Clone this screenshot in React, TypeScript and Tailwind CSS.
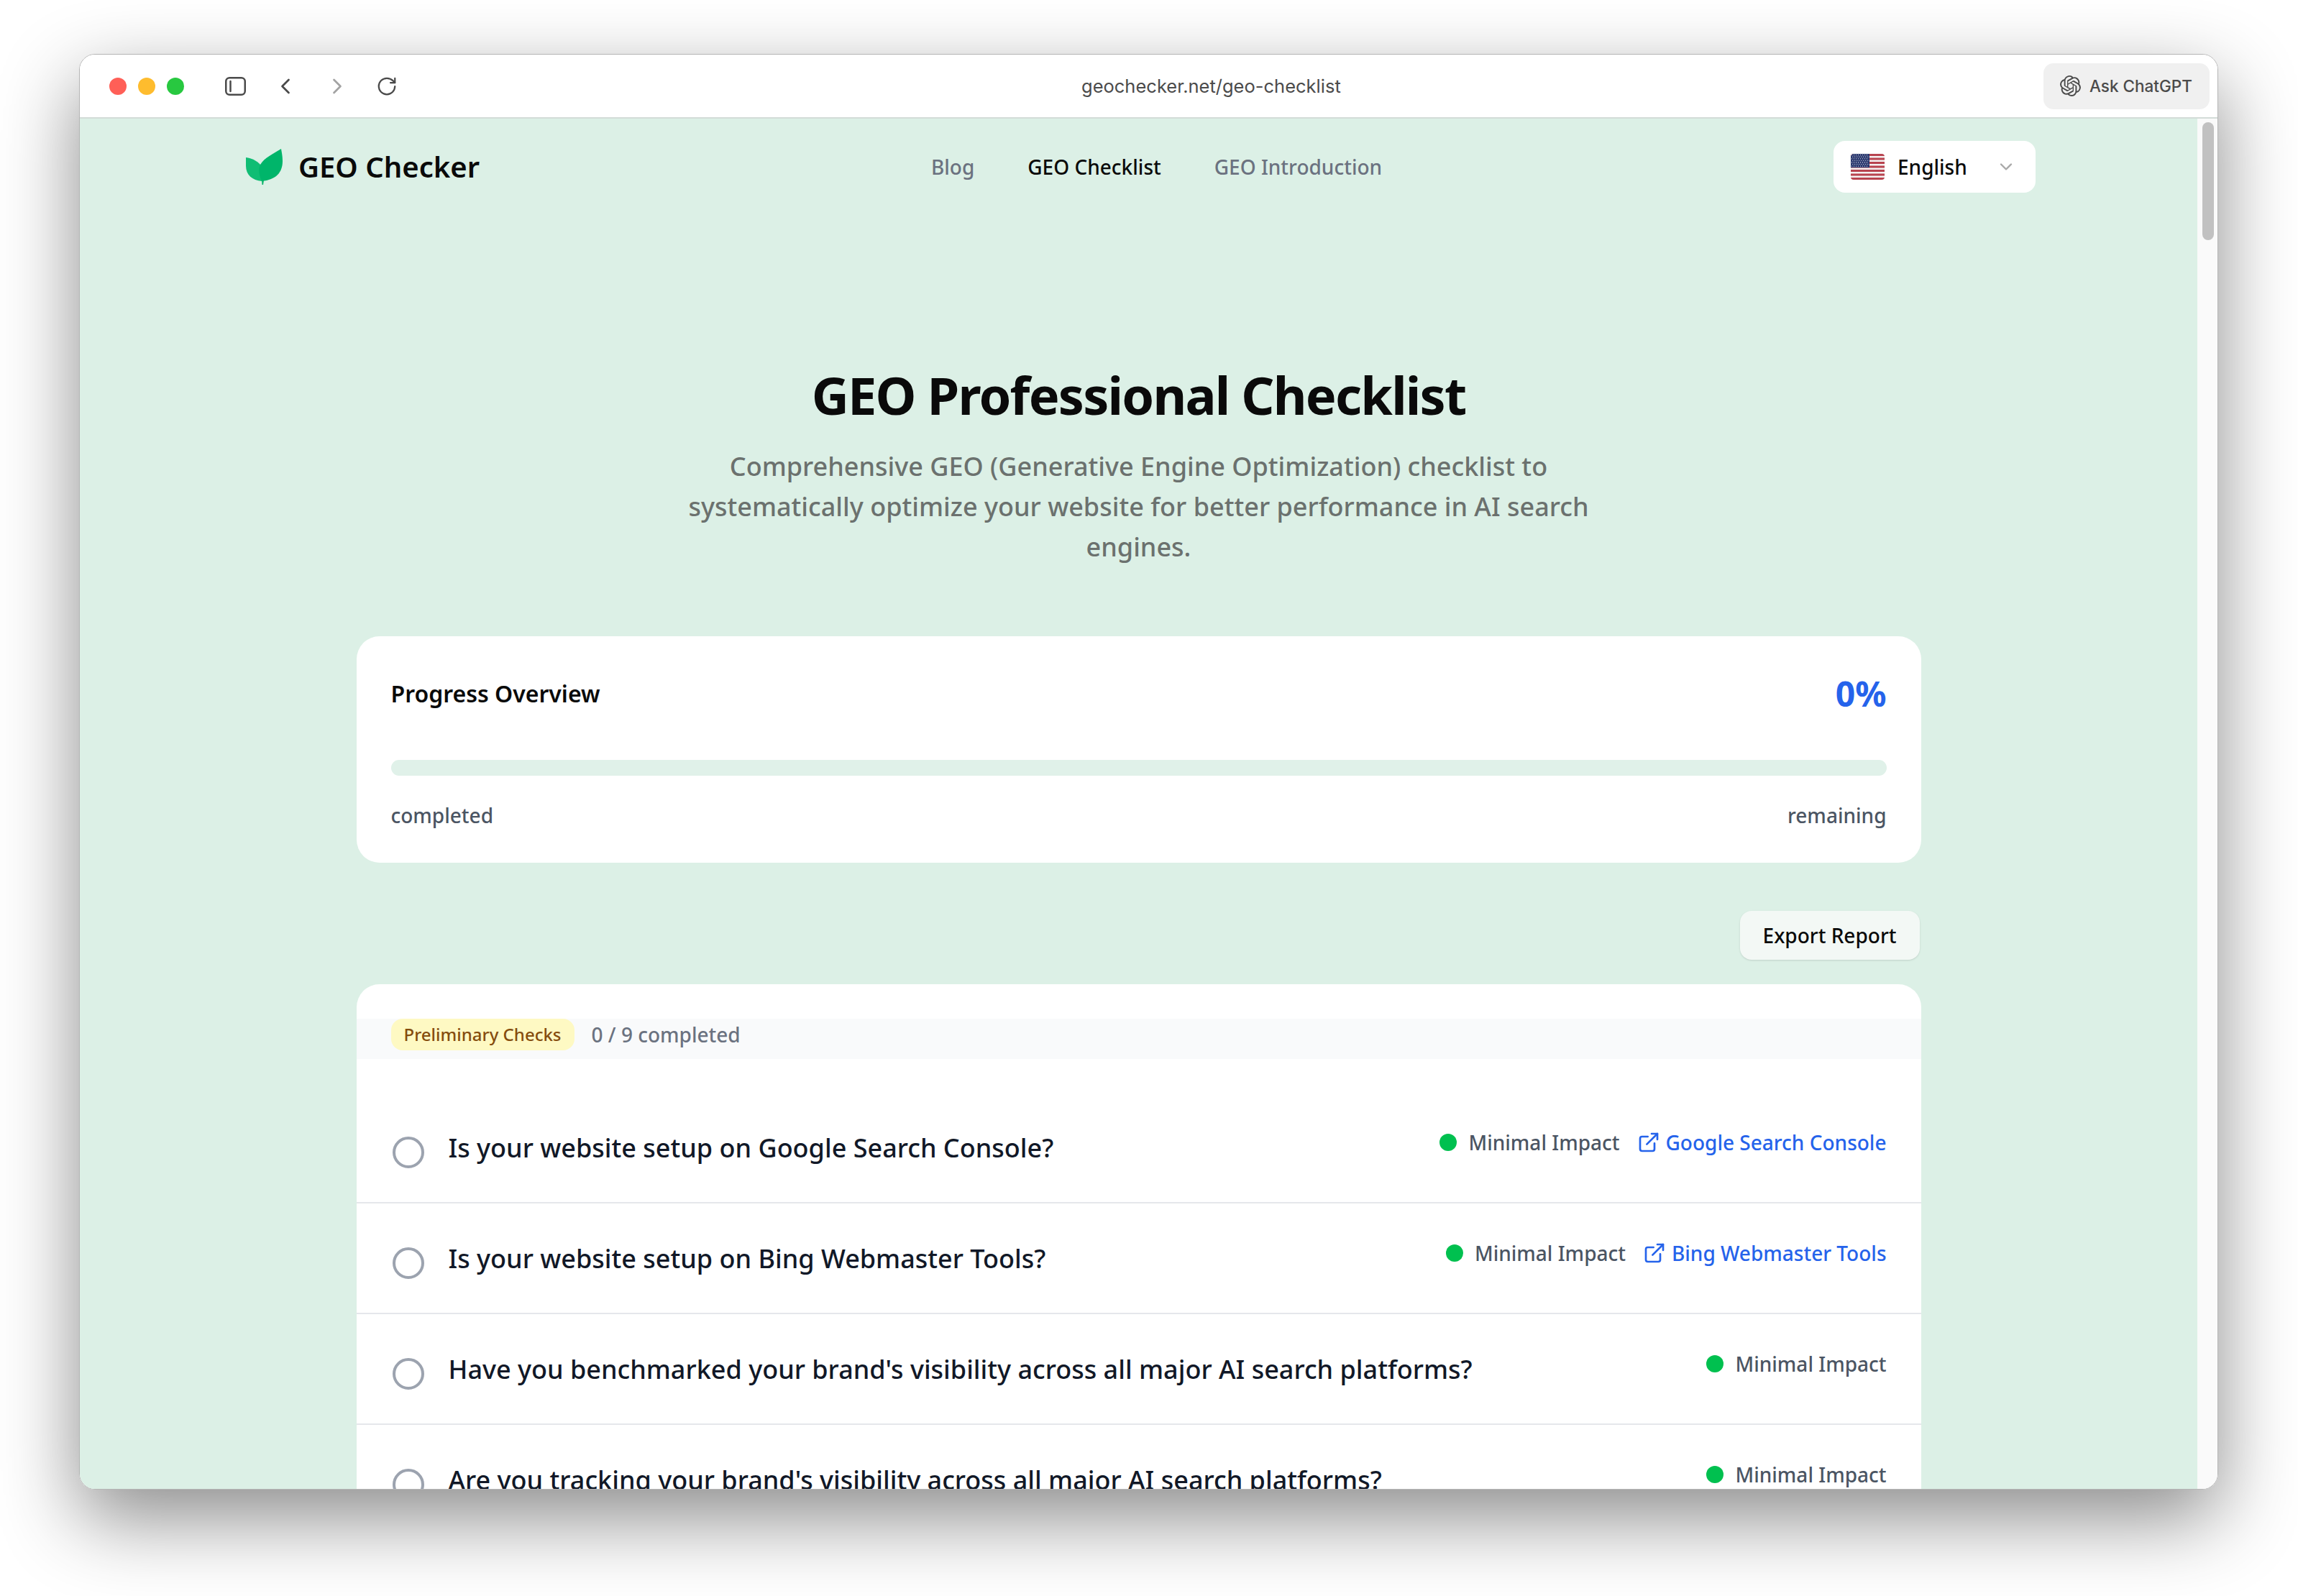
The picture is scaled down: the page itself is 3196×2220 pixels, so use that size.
import React from 'react';
import { ChevronDown, ChevronLeft, ChevronRight, ExternalLink, RotateCw } from 'lucide-react';
import { SiOpenai } from 'react-icons/si';

interface CheckItem {
  question: string;
  linkLabel?: string;
}

const items: CheckItem[] = [
  { question: 'Is your website setup on Google Search Console?', linkLabel: 'Google Search Console' },
  { question: 'Is your website setup on Bing Webmaster Tools?', linkLabel: 'Bing Webmaster Tools' },
  { question: "Have you benchmarked your brand's visibility across all major AI search platforms?" },
  { question: "Are you tracking your brand's visibility across all major AI search platforms?" },
];

const Leaf = () => (
  <svg viewBox="0 0 51 50" className="h-[50px] w-[51px] shrink-0">
    <path d="M22 44 L22.5 50 L24 50 L25 44 Z" fill="#10b56c" />
    <path d="M0 12 C8 13 16 17 20 22 L22 45 C9 44 0 36 0 24 Z" fill="#10bd74" />
    <path d="M49 0 C50 6 51 10 51 17 C51 33 42 43 22 45 C18 36 17 28 20 22 C26 12 38 7 49 0 Z" fill="#00b56a" />
  </svg>
);

const Flag = () => {
  const stars: React.ReactNode[] = [];
  for (let r = 0; r < 7; r++) {
    for (let c = 0; c < 8; c++) {
      stars.push(<circle key={`${r}-${c}`} cx={1.6 + c * 3 + (r % 2) * 1.2} cy={1.5 + r * 2.6} r={0.55} fill="#ffffff" />);
    }
  }
  return (
    <svg viewBox="0 0 47 36" className="h-[36px] w-[47px] shrink-0 rounded-[4px]">
      <rect width="47" height="36" fill="#f4f1f1" />
      {[0, 5.5, 11, 16.5, 22, 27.5, 33].map((y) => (
        <rect key={y} y={y} width="47" height="3" fill="#b8434f" />
      ))}
      <rect width="26" height="19" fill="#2c3a70" />
      {stars}
    </svg>
  );
};

const BrowserBar = () => (
  <div className="flex h-[89px] shrink-0 items-center border-b-2 border-[#d3dcd8] bg-white pl-[41px] pr-[11px]">
    <div className="flex gap-[16px]">
      <span className="h-[24px] w-[24px] rounded-full bg-[#ff5f57]" />
      <span className="h-[24px] w-[24px] rounded-full bg-[#febc2e]" />
      <span className="h-[24px] w-[24px] rounded-full bg-[#28c840]" />
    </div>
    <svg viewBox="0 0 29 26" fill="none" className="ml-[57px] h-[26px] w-[29px] text-[#4a4a4a]">
      <rect x="1.25" y="1.25" width="26.5" height="23.5" rx="5" stroke="currentColor" strokeWidth="2.5" />
      <path d="M7.5 6v14" stroke="currentColor" strokeWidth="2.5" strokeLinecap="round" />
    </svg>
    <ChevronLeft className="ml-[37px] h-[36px] w-[36px] text-[#4a4a4a]" strokeWidth={1.8} />
    <ChevronRight className="ml-[36px] h-[36px] w-[36px] text-[#a3a3a3]" strokeWidth={1.8} />
    <RotateCw className="ml-[36px] h-[30px] w-[30px] text-[#4a4a4a]" strokeWidth={1.8} />
    <span className="ml-[951px] mt-[2px] font-['Inter',sans-serif] text-[25.5px] text-[#4b4b4b]">geochecker.net/geo-checklist</span>
    <button className="ml-auto flex h-[64px] w-[231px] items-center gap-[12px] rounded-[14px] bg-[#f0f0f0] pl-[23px] font-['Inter',sans-serif] text-[22.5px] font-medium text-[#4b4b4b]">
      <SiOpenai className="h-[29px] w-[29px]" />
      Ask ChatGPT
    </button>
  </div>
);

const Nav = () => (
  <nav className="ml-[231px] flex h-[134px] w-[2489px] items-center justify-between">
    <div className="flex items-center gap-[22px]">
      <Leaf />
      <span className="text-[40px] font-semibold leading-[56px] text-[#0a0a0a]">GEO Checker</span>
    </div>
    <div className="flex items-center gap-[74px] text-[28px] font-medium text-[#6b7280]">
      <span>Blog</span>
      <span className="text-[#0a0a0a]">GEO Checklist</span>
      <span>GEO Introduction</span>
    </div>
    <button className="flex h-[72px] w-[281px] items-center rounded-[16px] bg-white pl-[24px] text-[28px] font-medium text-[#0a0a0a]">
      <Flag />
      <span className="ml-[18px]">English</span>
      <ChevronDown className="ml-[40px] h-[28px] w-[28px] text-[#a8a8a8]" strokeWidth={2} />
    </button>
  </nav>
);

const Row = ({ item, last }: { item: CheckItem; last: boolean }) => (
  <div className={`flex h-[154px] items-start justify-between pl-[50px] pr-[48px] ${last ? '' : 'border-b-2 border-[#e5e7eb]'}`}>
    <div className="mt-[49px] flex items-center gap-[34px]">
      <span className="mt-[12px] h-[44px] w-[44px] shrink-0 rounded-full border-[4px] border-[#9ca3af]" />
      <span className="text-[36px] font-medium leading-[44px] text-[#111827]">{item.question}</span>
    </div>
    <div className="mt-[49px] flex items-center text-[28px] font-medium leading-[40px]">
      <span className="h-[24px] w-[24px] rounded-full bg-[#00c04f]" />
      <span className="ml-[16px] text-[#4b5563]">Minimal Impact</span>
      {item.linkLabel && (
        <span className="ml-[24px] flex items-center gap-[8px] text-[#2563eb]">
          <ExternalLink className="h-[32px] w-[32px]" strokeWidth={2} />
          {item.linkLabel}
        </span>
      )}
    </div>
  </div>
);

const App: React.FC = () => {
  return (
    <div className="h-[2220px] w-[3196px] overflow-hidden bg-white pl-[110px] pt-[75px] font-['Noto_Sans',sans-serif]">
      <div className="flex h-[1997px] w-[2975px] flex-col overflow-hidden rounded-[22px] border border-[#b5b5b5] shadow-[0_40px_110px_rgba(0,0,0,0.46)]">
        <BrowserBar />
        <div className="flex min-h-0 flex-1">
          <main className="min-w-0 flex-1 overflow-hidden bg-[#dcf0e6]">
            <Nav />
            <header className="mt-[202px] text-center">
              <h1 className="text-[72px] font-bold leading-[96px] tracking-[-1.8px] text-[#0a0a0a]">GEO Professional Checklist</h1>
              <p className="mx-auto mt-[24px] w-[1344px] text-[36px] font-medium leading-[56px] text-[#6b716e]">
                Comprehensive GEO (Generative Engine Optimization) checklist to systematically optimize your website for better performance in AI search engines.
              </p>
            </header>
            <div className="mx-auto mt-[96px] w-[2176px]">
              <section className="h-[315px] rounded-[32px] bg-white px-[48px] pt-[48px]">
                <div className="flex h-[64px] items-center justify-between">
                  <span className="text-[32px] font-semibold text-[#0a0a0a]">Progress Overview</span>
                  <span className="text-[48px] font-bold text-[#2563eb]">0%</span>
                </div>
                <div className="mt-[60px] h-[22px] rounded-full bg-[#e0f1e9]" />
                <div className="mt-[35px] flex justify-between text-[28px] font-medium leading-[40px] text-[#4b5563]">
                  <span>completed</span>
                  <span>remaining</span>
                </div>
              </section>
              <div className="mt-[67px] flex justify-end pr-[2px]">
                <button className="h-[68px] w-[250px] rounded-[16px] bg-[#f3f8f5] text-[28px] font-medium text-[#0a0a0a] shadow-sm">Export Report</button>
              </div>
              <section className="mt-[34px] rounded-[32px] bg-white pt-[48px]">
                <div className="flex h-[56px] items-start gap-[24px] bg-[#f9fafb] pl-[48px]">
                  <span className="flex h-[44px] items-center rounded-[16px] bg-[#fef9c3] px-[18px] text-[24px] font-medium text-[#854d0e]">Preliminary Checks</span>
                  <span className="text-[28px] font-medium leading-[44px] text-[#6b7280]">0 / 9 completed</span>
                </div>
                <div className="mt-[47px]">
                  {items.map((item, i) => (
                    <Row key={item.question} item={item} last={i === items.length - 1} />
                  ))}
                </div>
              </section>
            </div>
          </main>
          <aside className="w-[28px] shrink-0 bg-[#fafafa] pl-[7px] pt-[5px]">
            <div className="h-[164px] w-[16px] rounded-full bg-[#c1c1c1]" />
          </aside>
        </div>
      </div>
    </div>
  );
};

export default App;
